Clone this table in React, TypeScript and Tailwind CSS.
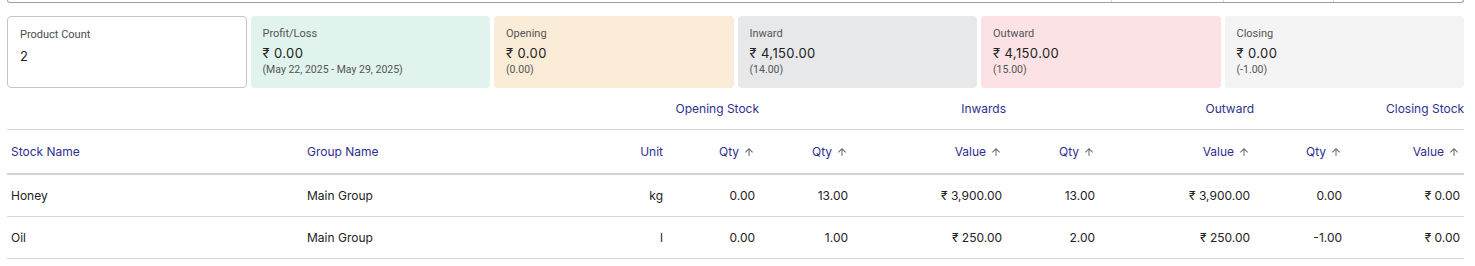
import React from "react";

type Card = {
  title: string;
  value: string;
  sub?: string;
  bg: string;
};

const cards: Card[] = [
  { title: "Profit/Loss", value: "₹ 0.00", sub: "(May 22, 2025 - May 29, 2025)", bg: "bg-[#e0f3ec]" },
  { title: "Opening", value: "₹ 0.00", sub: "(0.00)", bg: "bg-[#faecd7]" },
  { title: "Inward", value: "₹ 4,150.00", sub: "(14.00)", bg: "bg-[#e7e8ea]" },
  { title: "Outward", value: "₹ 4,150.00", sub: "(15.00)", bg: "bg-[#fce2e4]" },
  { title: "Closing", value: "₹ 0.00", sub: "(-1.00)", bg: "bg-[#f4f4f4]" },
];

const rows = [
  ["Honey", "Main Group", "kg", "0.00", "13.00", "₹ 3,900.00", "13.00", "₹ 3,900.00", "0.00", "₹ 0.00"],
  ["Oil", "Main Group", "l", "0.00", "1.00", "₹ 250.00", "2.00", "₹ 250.00", "-1.00", "₹ 0.00"],
];

function SortArrow() {
  return (
    <svg viewBox="0 0 24 24" className="w-3 h-3 ml-1 fill-[#6b6b6b] inline-block">
      <path d="M4 12l1.41 1.41L11 7.83V20h2V7.83l5.58 5.59L20 12l-8-8-8 8z" />
    </svg>
  );
}

function SortHead({ label }: { label: string }) {
  return (
    <th className="px-1 pt-[2px] text-right font-normal">
      <span className="inline-flex items-center">
        {label}
        <SortArrow />
      </span>
    </th>
  );
}

export default function App() {
  return (
    <div className="w-[1475px] h-[266px] bg-white pl-[7px] pr-[11px] font-['Inter','Noto_Sans',sans-serif] text-[#222] overflow-hidden">
      {/* barra cortada arriba */}
      <div className="h-[3px] border border-t-0 border-[#9e9e9e] rounded-b-[4px] flex">
        <div className="w-[1103px]" />
        <div className="w-[112px] border-l border-[#d4d4d4]" />
        <div className="w-[110px] border-l border-[#d4d4d4]" />
        <div className="flex-1 border-l border-[#d4d4d4]" />
      </div>

      <div className="mt-[13px] grid grid-cols-6 gap-[4px]">
        <div className="h-[72px] rounded-[4px] border border-[#c6c6c6] bg-white pl-[12px] pt-[10px]">
          <div className="font-['Roboto',sans-serif] text-[11px] leading-4 text-[#4a4a4a]">Product Count</div>
          <div className="mt-[4px] text-[13px] leading-[18px] text-[#222]">2</div>
        </div>
        {cards.map((c) => (
          <div key={c.title} className={`h-[72px] rounded-[4px] ${c.bg} pl-[12px] pt-[10px]`}>
            <div className="font-['Roboto',sans-serif] text-[11px] leading-4 text-[#555]">{c.title}</div>
            <div className="mt-[2px] text-[13px] leading-[18px] tracking-[0.4px] text-[#222]">
              {c.value}
            </div>
            <div className="font-['Roboto',sans-serif] text-[10.5px] leading-4 text-[#555]">{c.sub}</div>
          </div>
        ))}
      </div>

      <table className="w-full table-fixed border-collapse text-[12px]">
        <colgroup>
          <col className="w-[296px]" />
          <col className="w-[304px]" />
          <col className="w-[60px]" />
          <col className="w-[92px]" />
          <col className="w-[93px]" />
          <col className="w-[154px]" />
          <col className="w-[93px]" />
          <col className="w-[155px]" />
          <col className="w-[92px]" />
          <col className="w-[118px]" />
        </colgroup>
        <thead className="text-[#2f2f8f]">
          <tr className="h-[41px] border-b border-[#d6d6d6]">
            <th colSpan={4} className="pt-[2px] text-right font-normal">Opening Stock</th>
            <th colSpan={2} className="pt-[2px] text-right font-normal">Inwards</th>
            <th colSpan={2} className="pt-[2px] text-right font-normal">Outward</th>
            <th colSpan={2} className="pt-[2px] text-right font-normal">Closing Stock</th>
          </tr>
          <tr className="h-[45px] border-b-2 border-[#cfd2d6]">
            <th className="px-1 pt-[2px] text-left font-normal">Stock Name</th>
            <th className="px-1 pt-[2px] text-left font-normal">Group Name</th>
            <th className="px-1 pt-[2px] text-right font-normal">Unit</th>
            <SortHead label="Qty" />
            <SortHead label="Qty" />
            <SortHead label="Value" />
            <SortHead label="Qty" />
            <SortHead label="Value" />
            <SortHead label="Qty" />
            <SortHead label="Value" />
          </tr>
        </thead>
        <tbody>
          {rows.map((r) => (
            <tr key={r[0]} className="h-[42px] border-b border-[#d6d6d6]">
              {r.map((v, i) => (
                <td key={i} className={`px-1 pt-[2px] ${i < 2 ? "text-left" : "text-right"}`}>
                  {v}
                </td>
              ))}
            </tr>
          ))}
        </tbody>
      </table>
    </div>
  );
}
